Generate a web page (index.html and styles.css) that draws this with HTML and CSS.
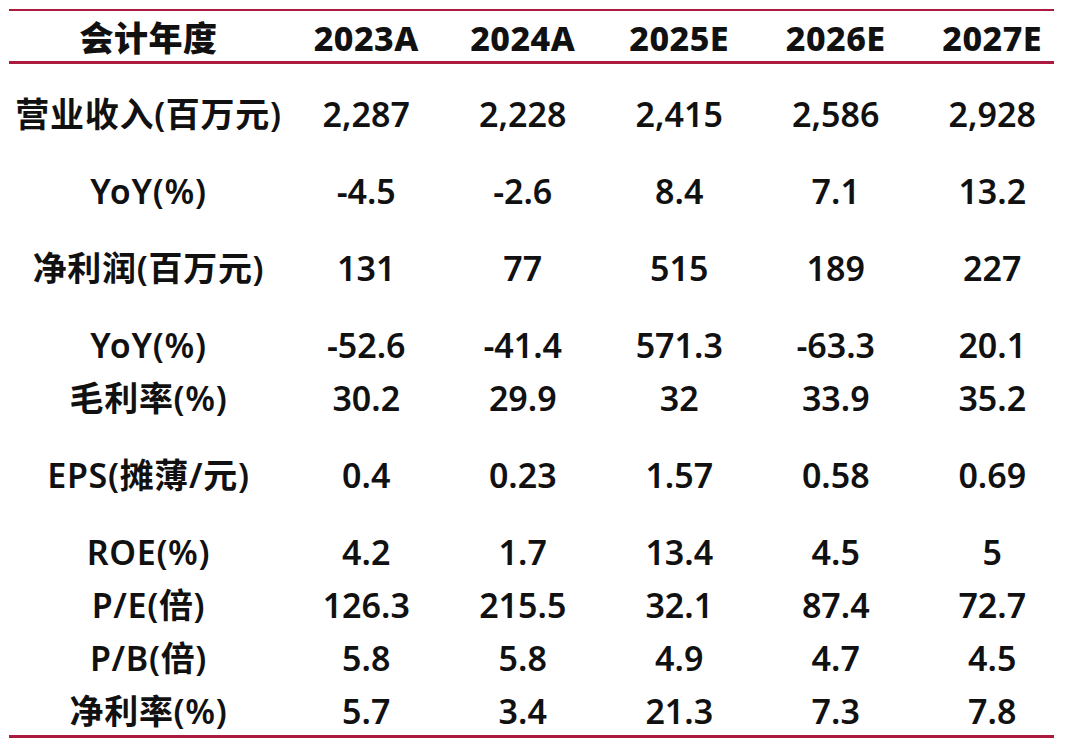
FILE: index.html
```html
<!DOCTYPE html>
<html lang="zh-CN">
<head>
<meta charset="utf-8">
<title>财务预测</title>
<link rel="stylesheet" href="styles.css">
</head>
<body>
<div class="table">
  <div class="row head">
    <div class="label">会计年度</div>
    <div>2023A</div><div>2024A</div><div>2025E</div><div>2026E</div><div>2027E</div>
  </div>
  <div class="body">
    <div class="row gap">
      <div class="label">营业收入(百万元)</div>
      <div>2,287</div><div>2,228</div><div>2,415</div><div>2,586</div><div>2,928</div>
    </div>
    <div class="row gap">
      <div class="label">YoY(%)</div>
      <div>-4.5</div><div>-2.6</div><div>8.4</div><div>7.1</div><div>13.2</div>
    </div>
    <div class="row gap">
      <div class="label">净利润(百万元)</div>
      <div>131</div><div>77</div><div>515</div><div>189</div><div>227</div>
    </div>
    <div class="row gap">
      <div class="label">YoY(%)</div>
      <div>-52.6</div><div>-41.4</div><div>571.3</div><div>-63.3</div><div>20.1</div>
    </div>
    <div class="row">
      <div class="label">毛利率(%)</div>
      <div>30.2</div><div>29.9</div><div>32</div><div>33.9</div><div>35.2</div>
    </div>
    <div class="row gap">
      <div class="label">EPS(摊薄/元)</div>
      <div>0.4</div><div>0.23</div><div>1.57</div><div>0.58</div><div>0.69</div>
    </div>
    <div class="row gap">
      <div class="label">ROE(%)</div>
      <div>4.2</div><div>1.7</div><div>13.4</div><div>4.5</div><div>5</div>
    </div>
    <div class="row">
      <div class="label">P/E(倍)</div>
      <div>126.3</div><div>215.5</div><div>32.1</div><div>87.4</div><div>72.7</div>
    </div>
    <div class="row">
      <div class="label">P/B(倍)</div>
      <div>5.8</div><div>5.8</div><div>4.9</div><div>4.7</div><div>4.5</div>
    </div>
    <div class="row last">
      <div class="label">净利率(%)</div>
      <div>5.7</div><div>3.4</div><div>21.3</div><div>7.3</div><div>7.8</div>
    </div>
  </div>
</div>
</body>
</html>
```
FILE: styles.css
```css
html, body {
  margin: 0;
  padding: 0;
  background: #ffffff;
}
body {
  font-family: "Noto Sans", "Noto Sans CJK SC", sans-serif;
  color: #111111;
}
.table {
  margin: 9px 0 0 9px;
  width: 1045px;
  border-top: 2px solid #ad1a40;
}
.row {
  display: grid;
  grid-template-columns: 279px repeat(5, 156.5px);
  height: 53px;
  line-height: 53px;
  font-size: 34px;
  font-weight: 600;
  white-space: nowrap;
}
.row > div {
  text-align: center;
}
.row > .label {
  letter-spacing: 0.7px;
}
.row.head {
  height: 50px;
  line-height: 54px;
  font-weight: 800;
  border-bottom: 3px solid #ad1a40;
  width: 1045px;
}
.row.head > div {
  letter-spacing: 0.5px;
}
.row.gap {
  margin-top: 24px;
}
.body {
  width: 1045px;
  border-bottom: 3px solid #ad1a40;
}
.row.last {
  height: 50px;
}
```
